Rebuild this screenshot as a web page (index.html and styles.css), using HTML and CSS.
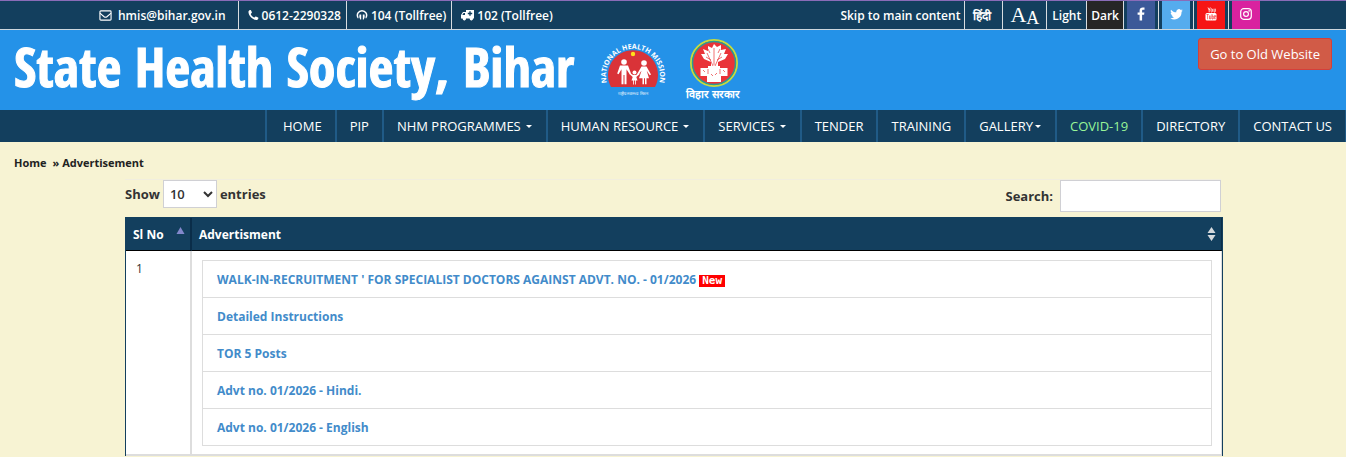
FILE: index.html
```html
<!DOCTYPE html>
<html lang="en">
<head>
    <meta charset="UTF-8">
    <meta name="viewport" content="width=device-width, initial-scale=1.0">
    <title>State Health Society, Bihar</title>
    <link rel="stylesheet" href="styles.css">
</head>
<body>
    <div class="topbar">
        <ul class="contacts">
            <li class="mail"><a href="mailto:hmis@bihar.gov.in"><svg width="13" height="13" viewBox="0 0 14 14"><rect x="1" y="2" width="12" height="10" rx="1" fill="none" stroke="#fff" stroke-width="1.2"/><path d="M1 4.5 5.5 8.3Q7 9.5 8.5 8.3L13 4.5" fill="none" stroke="#fff" stroke-width="1.2"/></svg>hmis@bihar.gov.in</a></li>
            <li><a href="tel:06122290328"><svg width="11" height="12" viewBox="0 0 11 12"><path d="M.5 2.5C.6 1.5 2 .8 2.6 1c.6.4 1.3 1.9 1.3 2.6 0 .6-1.2 1-1.1 1.6.3 1 2.3 3 3.3 3.3.6.1 1-1.2 1.6-1.1.8 0 2.3.8 2.7 1.4.2.7-.6 2-1.6 2.1C5 11.500 0 6.500.5 2.500Z" fill="#fff"/></svg>0612-2290328</a></li>
            <li><a href="tel:104"><svg width="12" height="12" viewBox="0 0 12 12"><path d="M2.500 8.500H2A4.600 4.600 0 1 1 10 8.500H9.500" fill="none" stroke="#fff" stroke-width="1.500"/><path d="M3.500 5.500h1.700v5H4.200Q2.700 8 3.500 5.500ZM8.500 5.500H6.800v5h1Q9.300 8 8.500 5.500Z" fill="#fff"/></svg>104 (Tollfree)</a></li>
            <li><a href="tel:102"><svg width="13" height="12" viewBox="0 0 13 12"><path d="M5 1h8v8.500h-1a1.700 1.700 0 0 1-3.400 0H5a1.700 1.700 0 0 1-3.400 0H0V6l2-3h3Z" fill="#fff"/><path d="M8.300 2.300h1.400v1.500h1.500v1.400H9.700v1.500H8.300V5.200H6.800V3.800h1.500ZM1.300 6 2.600 4H4v2Z" fill="#133f5e"/><circle cx="3.300" cy="10" r="1.400" fill="#fff"/><circle cx="10.300" cy="10" r="1.400" fill="#fff"/></svg>102 (Tollfree)</a></li>
        </ul>
        <ul class="tools">
            <li><a href="#main">Skip to main content</a></li>
            <li class="hindi"><a href="#" lang="hi">हिंदी</a></li>
            <li class="font-size"><a href="#" aria-label="Font size"><span class="big-a">A</span><span class="small-a">A</span></a></li>
            <li class="light"><a href="#">Light</a></li>
            <li class="dark"><a href="#">Dark</a></li>
            <li class="social"><a class="facebook" href="#" aria-label="Facebook"><svg width="12" height="14" viewBox="0 0 12 14"><path d="M9.500.500v2.300H8.200c-.9 0-1.100.4-1.100 1.100v1.500h2.300L9.100 7.700h-2v5.800H4.600V7.700h-2V5.400h2V3.600C4.600 1.500 5.900.400 7.700.400Z" fill="#fff"/></svg></a></li>
            <li class="social"><a class="twitter" href="#" aria-label="Twitter"><svg width="13" height="11" viewBox="0 0 24 20"><path d="M23.600 2.400c-.8.400-1.700.7-2.700.8 1-.6 1.700-1.500 2-2.600-.9.500-1.900.9-3 1.100A4.800 4.800 0 0 0 11.700 6C7.800 5.800 4.200 3.900 1.900 1 .6 3.200 1.300 6 3.400 7.400c-.8 0-1.500-.2-2.100-.6 0 2.300 1.600 4.300 3.800 4.700-.7.200-1.400.2-2.100.1.600 1.900 2.400 3.300 4.400 3.300A9.700 9.700 0 0 1 .400 16.900 13.600 13.600 0 0 0 21.300 4.800c.9-.7 1.700-1.500 2.300-2.400Z" fill="#fff"/></svg></a></li>
            <li class="social"><a class="youtube" href="#" aria-label="YouTube"><svg width="12" height="14" viewBox="0 0 12 14"><path d="m3 .500 1.200 2.800v2M5.300.500 4.200 3.300M6 2.200v2.300q.7 1 1.400 0V2.200q-.7-.8-1.400 0M9 1.700v3.200q.7.500 1.300-.3V1.700" fill="none" stroke="#fff" stroke-width=".8"/><rect x=".5" y="6" width="11" height="7.500" rx="1.500" fill="#fff"/><path d="M1.500 7.500h2.200M2.600 7.500v4.800M4.500 8.500v3.400h1.300V8.500M7 7v5h1.200V9H7M9.300 10h1.500V8.700H9.300v3h1.500" fill="none" stroke="#f61515" stroke-width=".6"/></svg></a></li>
            <li class="social"><a class="instagram" href="#" aria-label="Instagram"><svg width="12" height="12" viewBox="0 0 12 12"><rect x=".7" y=".7" width="10.600" height="10.600" rx="3" fill="none" stroke="#fff" stroke-width="1.200"/><circle cx="6" cy="6" r="2.400" fill="none" stroke="#fff" stroke-width="1.200"/><circle cx="9.100" cy="2.900" r=".8" fill="#fff"/></svg></a></li>
        </ul>
    </div>

    <header>
        <h1>State Health Society, Bihar</h1>
        <svg class="nhm-logo" width="66" height="60" viewBox="0 0 66 60" role="img" aria-label="National Health Mission">
            <path d="M11 49A25 25 0 1 1 55 49Z" fill="#d93338"/>
            <path id="arc" d="M8 48A27 27 0 1 1 58 48" fill="none"/>
            <text class="nhm-ring"><textPath href="#arc" startOffset="50%" text-anchor="middle">NATIONAL HEALTH MISSION</textPath></text>
            <circle cx="33" cy="16" r="2.200" fill="#ffe01b"/>
            <g fill="#fff">
                <circle cx="24" cy="24" r="2.800"/>
                <path d="M20 27.500h8l3 8-1.300.8-3.200-5v15h-2V37h-1v9.300h-2v-15l-3 5-1.300-.8Z"/>
                <circle cx="44" cy="25" r="2.800"/>
                <path d="M41.500 28.500h5l4.500 8-1.300.8-3-4.500 2.300 7.500h-2.500v6h-1.500v-6h-1v6h-1.500v-6H39l2.500-7.500-3.500 4.500-1.200-.8Z"/>
                <circle cx="34.500" cy="34.500" r="2"/>
                <path d="M33 37h3l3-2 .7 1-3.400 3 1.200 3.500h-1.700v4h-.8v-4h-1v4h-.8v-4h-1.700l1.200-3.500-3.300-3 .7-1Z"/>
            </g>
            <text class="nhm-caption" x="33" y="57" text-anchor="middle">राष्ट्रीय स्वास्थ्य मिशन</text>
        </svg>
        <svg class="bihar-logo" width="58" height="64" viewBox="0 0 58 64" role="img" aria-label="Bihar Government">
            <circle cx="30" cy="25" r="23" fill="#e93338" stroke="#c8dc3c" stroke-width="2"/>
            <circle cx="30" cy="25" r="21.500" fill="none" stroke="#299b94" stroke-width="1.500"/>
            <path d="M16.500 30H24v-2h12v2h7.500v8H37v6H23v-6h-6.500Z" fill="#fff"/>
            <path d="M27 29V24l-7-3-3-5 4 0-2-5 5 2v-5l4 2 2-4 3 3 4-2 0 5 5-1-2 5 4 0-3 5-7 3v5Z" fill="#fff"/>
            <path d="m29 28-6-13M30 27V10M31 28l6-13M26 15l-2-4M34 15l2-4M22 19l5 3M38 19l-5 3M24 31v5M36 31v5M19 32l2 2M39 32l2 2M27 36l2 2M33 35l-2 2" fill="none" stroke="#e93338" stroke-width=".7"/>
            <text class="bihar-caption" x="29" y="60" text-anchor="middle">विहार सरकार</text>
        </svg>
        <button class="old-site" type="button">Go to Old Website</button>
    </header>

    <nav>
        <a class="home" href="#">HOME</a>
        <a href="#">PIP</a>
        <a class="dropdown" href="#">NHM PROGRAMMES</a>
        <a class="dropdown" href="#">HUMAN RESOURCE</a>
        <a class="dropdown" href="#">SERVICES</a>
        <a href="#">TENDER</a>
        <a href="#">TRAINING</a>
        <a class="dropdown close" href="#">GALLERY</a>
        <a class="covid" href="#">COVID-19</a>
        <a href="#">DIRECTORY</a>
        <a href="#">CONTACT US</a>
    </nav>

    <div class="breadcrumb"><a href="#">Home</a><span>» Advertisement</span></div>

    <main id="main">
        <div class="table-tools">
            <label class="length">Show
                <select>
                    <option>10</option>
                    <option>25</option>
                    <option>50</option>
                    <option>100</option>
                </select>
                entries</label>
            <label class="search">Search: <input type="search"></label>
        </div>
        <table class="adverts">
            <thead>
                <tr>
                    <th class="number"><span>Sl No<svg width="9" height="14" viewBox="0 0 9 14"><path d="M4.500 0 8.500 7H.500Z" fill="#8288cc"/></svg></span></th>
                    <th><span>Advertisment<svg width="9" height="14" viewBox="0 0 9 14"><path d="M4.500 0 8.500 6H.500ZM.500 8h8l-4 6Z" fill="#d5d9dd"/></svg></span></th>
                </tr>
            </thead>
            <tbody>
                <tr>
                    <td>1</td>
                    <td>
                        <table class="links">
                            <tr><td><a href="#">WALK-IN-RECRUITMENT ' FOR SPECIALIST DOCTORS AGAINST ADVT. NO. - 01/2026</a> <span class="new">New</span></td></tr>
                            <tr><td><a href="#">Detailed Instructions</a></td></tr>
                            <tr><td><a href="#">TOR 5 Posts</a></td></tr>
                            <tr><td><a href="#">Advt no. 01/2026 - Hindi.</a></td></tr>
                            <tr><td><a href="#">Advt no. 01/2026 - English</a></td></tr>
                        </table>
                    </td>
                </tr>
            </tbody>
        </table>
    </main>
</body>
</html>
```
FILE: styles.css
```css
* {
    box-sizing: border-box;
}
body {
    margin: 0;
    background-color: #f7f3d3;
    font-family: "Open Sans", sans-serif;
    font-size: 13px;
    color: #333;
}
a {
    text-decoration: none;
}
.topbar {
    display: flex;
    justify-content: space-between;
    height: 30px;
    padding: 0 86px 0 90px;
    background-color: #133f5e;
    border-top: 1px solid #8a6cb8;
    border-bottom: 1px solid #ccd6dd;
}
.topbar ul {
    display: flex;
    margin: 0;
    padding: 0;
    list-style: none;
}
.topbar li {
    display: flex;
    border-right: 1px solid #d8dde0;
}
.topbar li:last-child {
    border-right: none;
}
.topbar a {
    display: flex;
    align-items: center;
    gap: 3px;
    padding: 0 4px;
    color: #fff;
    font-size: 12px;
    font-weight: 600;
}
.contacts a {
    padding: 0 5px 0 9px;
}
.contacts .mail a {
    gap: 6px;
    padding-right: 12px;
}
.topbar .hindi a {
    padding: 0 11px 0 8px;
}
.topbar .font-size a {
    gap: 0;
    padding: 0 7px;
    font-family: "Liberation Serif", serif;
    font-weight: 400;
}
.topbar .light a {
    padding: 0 5px;
}
.big-a {
    font-size: 22px;
}
.small-a {
    padding-top: 6px;
    font-size: 18px;
}
.dark {
    background-color: #262626;
}
.topbar .social a {
    justify-content: center;
    width: 28px;
    margin: 0 3px;
    padding: 0 0 2px;
}
.topbar .social:last-child a {
    margin-right: 0;
}
.facebook {
    background-color: #3b5998;
}
.twitter {
    background-color: #55acee;
}
.youtube {
    background-color: #f61515;
}
.instagram {
    background-color: #d9229f;
}
header {
    display: flex;
    align-items: flex-start;
    height: 80px;
    padding: 8px 14px;
    background-color: #2492e8;
}
h1 {
    margin: 0;
    color: #fff;
    font-family: "Open Sans Condensed", "Liberation Sans Narrow", "Liberation Sans", sans-serif;
    font-size: 54px;
    font-weight: 700;
    line-height: 56px;
    white-space: nowrap;
    -webkit-text-stroke: 1px #fff;
}
.nhm-logo {
    margin-left: 26px;
}
.bihar-logo {
    margin-left: 18px;
}
.nhm-ring {
    fill: #fff;
    font-size: 7px;
    font-weight: 700;
}
.nhm-caption {
    fill: #fff;
    font-size: 4px;
}
.bihar-caption {
    fill: #fff;
    font-size: 11px;
    font-weight: 700;
}
.old-site {
    height: 32px;
    margin-left: auto;
    padding: 0 11px;
    background-color: #d15b47;
    border: 1px solid #d43f3a;
    border-radius: 3px;
    color: #fff;
    font-family: inherit;
    font-size: 13px;
}
nav {
    display: flex;
    justify-content: flex-end;
    height: 32px;
    background-color: #133f5e;
    border-right: 1px solid #205b87;
}
nav a {
    display: flex;
    align-items: center;
    padding: 0 13px;
    border-left: 2px solid #205b87;
    color: #fff;
    font-size: 13px;
    white-space: nowrap;
}
nav .home {
    padding-left: 16px;
}
nav .covid {
    color: #98f598;
}
nav .dropdown {
    padding-right: 14px;
}
.dropdown::after {
    content: "";
    margin-left: 5px;
    border: 3px solid transparent;
    border-top-color: #fff;
    border-bottom: none;
}
.dropdown.close::after {
    margin-left: 2px;
}
.breadcrumb {
    display: flex;
    gap: 6px;
    padding: 13px 14px 8px;
    color: #222;
    font-size: 11px;
    font-weight: 700;
    line-height: 16px;
}
.breadcrumb a {
    color: #222;
}
main {
    margin: 0 123px 0 125px;
}
.table-tools {
    display: flex;
    justify-content: space-between;
    align-items: flex-start;
    height: 38px;
    margin-right: 2px;
    border-top: 1px solid #f1eedf;
    font-size: 13px;
    font-weight: 700;
}
.table-tools label {
    display: flex;
    align-items: center;
    gap: 3px;
}
.table-tools .search {
    gap: 7px;
}
.length select {
    width: 54px;
    height: 28px;
    padding: 0 2px;
    background-color: #fff;
    border: 1px solid #d0d0d4;
    color: #333;
    font-family: inherit;
    font-size: 13px;
    font-weight: 600;
}
.search input {
    width: 161px;
    height: 32px;
    border: 1px solid #d0d0d4;
    background-color: #fff;
}
.adverts {
    width: 100%;
    border: 1px solid #133f5e;
    border-bottom: none;
    border-spacing: 0;
    table-layout: fixed;
    background-color: #fff;
}
.adverts th {
    height: 33px;
    padding: 0 5px 0 7px;
    background-color: #133f5e;
    border-right: 2px solid #0a2d49;
    border-bottom: 1px solid #000;
    color: #fff;
    font-size: 12px;
    font-weight: 700;
    text-align: left;
}
.adverts .number {
    width: 66px;
}
th span {
    display: flex;
    justify-content: space-between;
    align-items: center;
}
.adverts > tbody > tr > td {
    padding: 9px 9px 8px 10px;
    border-right: 2px solid #ddd;
    border-bottom: 2px solid #ddd;
    vertical-align: top;
    font-size: 12px;
}
.adverts th:last-child,
.adverts > tbody > tr > td:last-child {
    border-right-width: 1px;
}
.links {
    width: 100%;
    border-collapse: collapse;
}
.links td {
    height: 37px;
    padding: 0 14px;
    border: 1px solid #ddd;
    font-size: 12px;
}
.links a {
    color: #428bca;
    font-weight: 700;
}
.new {
    display: inline-block;
    padding: 0 3px;
    background-color: #f00;
    color: #fff;
    font-family: "DejaVu Sans Mono", monospace;
    font-size: 11px;
    font-weight: 700;
    line-height: 12px;
}
```
